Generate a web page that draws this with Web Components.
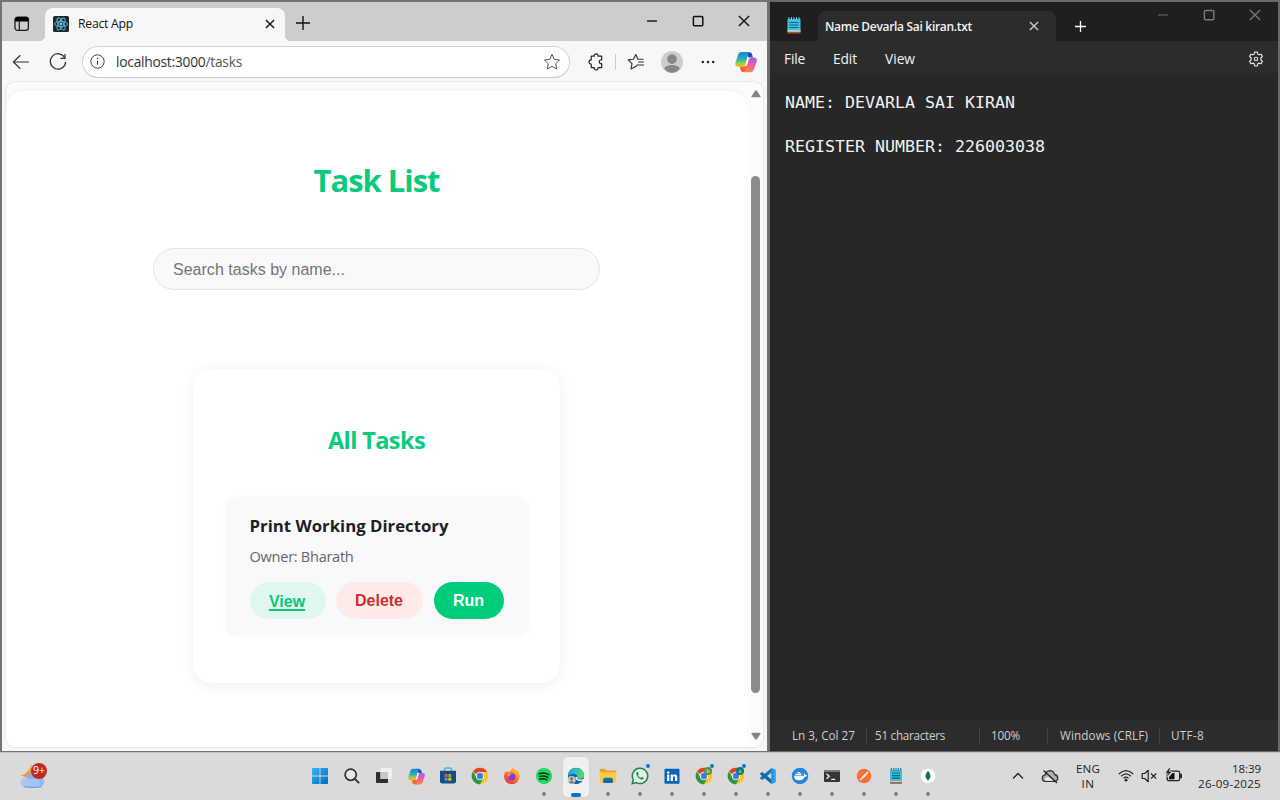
<!DOCTYPE html>
<html lang="en">
<head>
<meta charset="utf-8">
<title>Desktop</title>
<style>
html,body{margin:0;height:100%}
body{width:1280px;height:800px;overflow:hidden;background:#dadada;font-family:"Open Sans","Noto Sans",sans-serif}
</style>
</head>
<body>
<desk-top></desk-top>
<script>
const COPILOT = `<defs><linearGradient id="a" x1="0" y1="0" x2="0" y2="1"><stop offset="0" stop-color="#1c7fe0"/><stop offset=".5" stop-color="#28b6b0"/><stop offset=".8" stop-color="#b4cf35"/><stop offset="1" stop-color="#f2b71f"/></linearGradient><linearGradient id="b" x1=".4" y1="0" x2=".3" y2="1"><stop offset="0" stop-color="#a45cf0"/><stop offset=".5" stop-color="#f0609a"/><stop offset="1" stop-color="#f78a3c"/></linearGradient></defs><path d="M15.500 1.500c1 .3 1.400 1.200 1.700 2.300l.8 2.700h-4.500L11 1z" fill="#174fc0"/><path d="M7 1h8c-1 .3-1.600 1.500-2 3l-2.400 8.400C9.900 15 9 15.800 7 15.800H3.200C.6 15.800-.2 14 .5 11.500L2.900 4.300C3.600 2 4.700 1 7 1z" fill="url(#a)"/><path d="M4.800 15.800H7c2 0 3-.8 3.700-3.400l.6-2.400 1.700 10.800c-.6.300-1 .3-2 .3H7.700c-1.200 0-1.700-1.300-2.100-2.600z" fill="#f4682f"/><path d="M15 21.200H8.500c1.500-.3 2.100-1.700 2.500-3L13.400 9.600C14.100 7.300 15 6.500 17 6.500h2c2.600 0 3.300 2 2.600 4.300l-2.500 7.300c-.8 2.200-1.900 3.100-4.100 3.100z" fill="url(#b)"/><path d="M12.700 6.500h1.900c-1 .8-1.400 1.900-1.700 3.200l-1.600 5.500H9.500c.7-.7 1-1.600 1.300-2.600z" fill="#fff"/>`;
const ICONS = {
  workspace:[16,16,`<rect x="1" y="1.2" width="13.4" height="13.2" rx="2.6" fill="none" stroke="#1c1c1c" stroke-width="1.3"/><path d="M1 5.5V3.6Q1 1 3.6 1h8.2Q14.4 1 14.4 3.6v1.9z" fill="#050505"/><path d="M5.3 5v9.4" stroke="#1c1c1c" stroke-width="1.2"/>`],
  react:[16,16,`<rect width="16" height="16" rx="1.5" fill="#20262c"/><g fill="none" stroke="#58b8d0" stroke-width=".95"><ellipse cx="8" cy="8" rx="6.6" ry="2.6"/><ellipse cx="8" cy="8" rx="6.6" ry="2.6" transform="rotate(60 8 8)"/><ellipse cx="8" cy="8" rx="6.6" ry="2.6" transform="rotate(120 8 8)"/></g><circle cx="8" cy="8" r="1.4" fill="#62d4ee"/>`],
  x9:[10,10,`<path d="M.9.9l8.2 8.2M9.1.9L.9 9.1" stroke="currentColor" stroke-width="1.35" fill="none"/>`],
  x11:[12,12,`<path d="M.9.9l10.2 10.2M11.1.9L.9 11.1" stroke="currentColor" stroke-width="1.35" fill="none"/>`],
  plus:[14,14,`<path d="M7 0v14M0 7h14" stroke="currentColor" stroke-width="1.4"/>`],
  plusS:[11,11,`<path d="M5.500 0v11M0 5.500h11" stroke="#fff" stroke-width="1.300"/>`],
  min:[12,12,`<path d="M1 6h10" stroke="currentColor" stroke-width="1.4"/>`],
  max:[12,12,`<rect x="1.4" y="1.4" width="9.400" height="9.400" rx="1" fill="none" stroke="currentColor" stroke-width="1.500"/>`],
  back:[18,16,`<path d="M17 8H1.6M8.3 1.2L1.4 8l6.9 6.8" fill="none" stroke="#333" stroke-width="1.2"/>`],
  reload:[18,18,`<path d="M15.7 4.6A7.7 7.7 0 1 0 16.7 9" fill="none" stroke="#333" stroke-width="1.25"/><path d="M16 .9v4.4h-4.5" fill="none" stroke="#333" stroke-width="1.25"/>`],
  info:[15,15,`<circle cx="7.5" cy="7.5" r="6.7" fill="none" stroke="#444" stroke-width="1"/><path d="M7.5 6.7v4" stroke="#333" stroke-width="1.1"/><circle cx="7.5" cy="4.5" r=".8" fill="#333"/>`],
  star:[18,18,`<path d="M9 1.4l2.3 4.9 5.3.7-3.9 3.7 1 5.3L9 13.4 4.3 16l1-5.3L1.4 7l5.3-.7z" fill="none" stroke="#555" stroke-width="1" stroke-linejoin="round"/>`],
  puzzle:[18,18,`<path d="M4.2 3.2h3a2 1.9 0 1 1 3.9 0h3.6v3.6a2 2 0 1 0 0 3.9v3.9h-3.6a2 1.9 0 1 1-3.9 0h-3v-3.4a2 2 0 1 1 0-4.3z" fill="none" stroke="#262626" stroke-width="1.2" stroke-linejoin="round"/>`],
  favs:[18,18,`<path d="M10.2 11.2l-.2 1.6L4 16l1-5.4L1.2 6.9l5.2-.7L8.8 1.500l2.100 4.700h5.600M11 9h6M11 12h6" fill="none" stroke="#333" stroke-width="1.15" stroke-linejoin="round"/>`],
  avatar:[22,22,`<circle cx="11" cy="11" r="11" fill="#cfcdca"/><circle cx="11" cy="8.1" r="4.8" fill="#888684"/><path d="M3.200 17.600Q5 13.900 11 13.900t7.800 3.700Q15.800 21.800 11 21.800t-7.800-4.200z" fill="#888684"/>`],
  dots:[14,4,`<circle cx="1.8" cy="2" r="1.25" fill="#222"/><circle cx="7" cy="2" r="1.25" fill="#222"/><circle cx="12.200" cy="2" r="1.250" fill="#222"/>`],
  copilot:[22,22,COPILOT],
  cop:[22,22,COPILOT],
  up:[10,8,`<path d="M1 7.300Q0 7.300.5 6.200L3.900 1Q5-.3 6.100 1l3.400 5.200Q10 7.300 9 7.300z" fill="#858585"/>`],
  note:[14,17,`<rect x=".5" y="13" width="13" height="3.500" rx=".5" fill="#a4592b"/><rect x=".5" y="12.600" width="13" height="2" fill="#eee"/><path d="M.5 2.200h13v11.300h-13z" fill="#43bfe2"/><path d="M2 .3v3M4.500.3v3M7 .3v3M9.500.3v3M12 .3v3" stroke="#72dff2" stroke-width="1.100"/><path d="M2.500 5.500h9M2.500 8h9M2.500 10.500h9" stroke="#0c6184" stroke-width="1.100"/>`],
  gear:[16,16,`<path d="M6.700 1h2.600l.5 2.100 1.200.7 2.100-.6 1.300 2.200-1.500 1.600v1.900l1.500 1.600-1.300 2.200-2.100-.6-1.200.7-.5 2.200H6.700l-.5-2.200-1.200-.7-2.100.6-1.300-2.200L3.100 8.900V7L1.600 5.400l1.300-2.200 2.100.6 1.200-.7z" fill="none" stroke="#e8e8e8" stroke-width="1.150" stroke-linejoin="round"/><circle cx="8" cy="8" r="1.700" fill="none" stroke="#e8e8e8" stroke-width="1.100"/>`],
  weather:[28,30,`<path d="M11.500 3q-.5 9 6 10l-6 5-10.500-3.500Q9.500 12 11.500 3z" fill="#f29b32"/><circle cx="13" cy="17" r="6" fill="#86aef0"/><circle cx="5.500" cy="21.500" r="4.800" fill="#a9c7f8"/><circle cx="19" cy="20.500" r="5.300" fill="#93b8f4"/><path d="M5.500 18h14v8.200h-14z" fill="#a4c4f8"/><path d="M3.500 25.500q2 .8 9 .8t9-.800" stroke="#6e9be8" stroke-width="1.200" fill="none"/>`],
  win:[16,16,`<defs><linearGradient id="w" x1="0" y1="0" x2="1" y2="1"><stop stop-color="#35b6ec"/><stop offset="1" stop-color="#0069c9"/></linearGradient></defs><path d="M0 .8Q0 0 .8 0h6.800v7.600H0zM8.400 0h6.800q.8 0 .8.800v6.800H8.400zM0 8.400h7.600V16H.8q-.8 0-.8-.8zM8.400 8.400H16v6.800q0 .8-.8.800H8.400z" fill="url(#w)"/>`],
  search:[16,16,`<circle cx="6.700" cy="6.700" r="5.600" fill="#e6e6e6" stroke="#2c2c2c" stroke-width="1.700"/><path d="M10.800 10.900l4.300 4.300" stroke="#2c2c2c" stroke-width="1.900"/>`],
  taskview:[16,16,`<rect x="4.500" y="0" width="11.500" height="11" rx="1" fill="#f1f1f1"/><path d="M1 4h3.500v7H12v3.300q0 .7-.8.700H.8q-.8 0-.8-.700V4.800Q0 4 1 4z" fill="#2e2e2e"/><path d="M4.500 4H12v7H4.500z" fill="#c8c8c8"/>`],
  store:[18,18,`<path d="M5.500 4V2.300q0-1.300 1.300-1.300h4.400q1.300 0 1.300 1.300V4" fill="none" stroke="#3fb6ea" stroke-width="1.500"/><path d="M1 3.800h16v10.400Q17 16.500 14.700 16.500H3.300Q1 16.500 1 14.200z" fill="#164d80"/><path d="M5.600 7h3v3h-3z" fill="#ef5a2a"/><path d="M9.300 7h3v3h-3z" fill="#84bd28"/><path d="M5.600 10.700h3v3h-3z" fill="#29a9e8"/><path d="M9.300 10.700h3v3h-3z" fill="#fcba18"/>`],
  chrome:[18,18,`<circle cx="9" cy="9" r="8.300" fill="#f9c51f"/><path d="M9 9L1.800 4.850A8.300 8.300 0 0 1 16.200 4.850L9 5.200z" fill="#dd4335"/><path d="M1.800 4.850L5.700 11l3.800 6.280A8.300 8.300 0 0 1 1.800 4.850z" fill="#29964a"/><path d="M9 17.300l3.500-6.200-3.500 1-3.300-1.200L8 17.200z" fill="#29964a"/><circle cx="9" cy="9" r="4.100" fill="#fff"/><circle cx="9" cy="9" r="3.200" fill="#3a7de8"/>`],
  firefox:[18,18,`<defs><linearGradient id="f" x1=".9" y1="0" x2=".2" y2="1"><stop stop-color="#ffd83b"/><stop offset=".45" stop-color="#ff8128"/><stop offset="1" stop-color="#ed2459"/></linearGradient></defs><path d="M9.800.8q1.600 1 2.600 2.800 1-.4 1.300-1 3 2.700 3 6.700 0 3.400-2.300 5.600T9 17.200q-3.400 0-5.700-2.300T1 9.300Q1 6 3 3.700q.1 1 .8 1.500 2-1.100 3.800-.9Q8.300 2 9.800.8z" fill="url(#f)"/><circle cx="8.800" cy="9.800" r="3.600" fill="#7c3fd6"/><path d="M4.500 6.700q2-.6 4.500.5-2.400.4-2.900 2.600-1.500-1-1.600-3.100z" fill="#ff9a2c"/>`],
  spotify:[18,18,`<circle cx="9" cy="9" r="8" fill="#20d560"/><path d="M4.300 6.700q5-1.600 9.600.9M4.700 9.500q4.500-1.300 8.200.8M5 12.100q4-1 7 .700" stroke="#102a18" stroke-width="1.500" stroke-linecap="round" fill="none"/>`],
  edge:[18,18,`<defs><linearGradient id="e" x1="0" y1="0" x2="1" y2=".4"><stop stop-color="#219ee0"/><stop offset=".55" stop-color="#2fc4b4"/><stop offset="1" stop-color="#62d656"/></linearGradient></defs><circle cx="9" cy="9" r="8.200" fill="#0f62b4"/><path d="M.9 8.500A8.200 8.200 0 0 1 17.200 8.300q.1 3.300-4.300 3.400-3.200 0-2.800-2 .3-1.500-1-2.300Q6 5.500.9 8.500z" fill="url(#e)"/><path d="M9.300 10q-.3 3 3.200 3.300t4.300-1.300" fill="none" stroke="#f4f8fb" stroke-width="1.500"/><circle cx="4.600" cy="13" r="4" fill="#c9c9c9"/><circle cx="4.600" cy="11.700" r="1.600" fill="#777"/><path d="M2 15.200q2.600-3 5.200 0-2.500 2.600-5.200 0z" fill="#777"/>`],
  folder:[18,18,`<path d="M.8 3q0-1.200 1.200-1.200h4l1.600 1.700H16q1.200 0 1.200 1.200V8H.8z" fill="#e9a321"/><path d="M.8 5.300h15.200q1.200 0 1.200 1.200v8.300q0 1.200-1.200 1.200H2Q.8 16 .8 14.800z" fill="#fbcb45"/><path d="M4.200 16v-3.500q0-1.700 1.700-1.700h6.300q1.700 0 1.700 1.700V16z" fill="#1471b6"/><path d="M5 14.200h8" stroke="#0d5590"/>`],
  whatsapp:[18,18,`<path d="M1.200 16.700l1.100-4.100A7.700 7.700 0 1 1 5.300 15.600z" fill="#e2efe6" stroke="#1f8553" stroke-width="1.500"/><path d="M6.200 4.800q-1.200 1-.8 2.400 1.400 4 5.100 5.300 1.800.3 2.500-1.400l-2.200-1.200-1.100 1q-1.900-.8-2.700-2.600l.7-1.100-.8-2.200z" fill="#1f8553"/>`],
  linkedin:[18,18,`<rect x="1.500" y="1.700" width="15" height="15" rx="1" fill="#0a61b8"/><circle cx="5.200" cy="5.400" r="1.250" fill="#fff"/><path d="M4.100 7.500h2.200v6.400H4.100zM7.700 7.500h2.100v.9q2-2 3.700-.5.7.7.7 2v4H12v-3.300q0-1.400-1-1.400-1.100 0-1.100 1.500v3.200H7.700z" fill="#fff"/>`],
  vscode:[18,18,`<path d="M12.500 1l4.300 1.700v12.600L12.500 17z" fill="#27a2eb"/><path d="M12.500 1v4.500L3.300 13 1 11.500v-.8z" fill="#1277bd"/><path d="M12.500 17v-4.500L3.300 5 1 6.500v.8z" fill="#0c67ad"/><path d="M12.500 1.100l1.200 1v13.700l-1.200 1.100z" fill="#1b8bd6"/>`],
  docker:[18,18,`<circle cx="9" cy="9" r="8.300" fill="#2287e2"/><path d="M3 8.800h10q.2-1.100-.3-1.900l.8-.7q1.200.9 1.200 1.900l1.500.2q-.6 1.500-2.400 1.500-1.500 3.500-5.700 3.500Q3 13.300 3 8.800z" fill="#fff"/><path d="M4.400 6.700h6v1.500h-6zM6.500 5h2.900v1.300H6.500z" fill="#fff"/>`],
  terminal:[18,18,`<rect x="1" y="3" width="16" height="12" rx="1" fill="#333536"/><path d="M1 5V4q0-1 1-1h14q1 0 1 1v1z" fill="#77797b"/><path d="M3.500 6.700L6.300 9.200l-2.800 2.500M8.200 12.300h4" stroke="#f2f2f2" stroke-width="1.300" fill="none"/>`],
  postman:[18,18,`<circle cx="9" cy="9" r="7.300" fill="#fb6f3b"/><path d="M12.800 4.300l1 1.100-5 5.500-3.700 2.500-.6-.3 2.700-3.500z" fill="#ffe9df"/>`],
  tnote:[18,18,`<rect x="3" y="14.500" width="12" height="2.200" fill="#9a5024"/><rect x="3" y="13.800" width="12" height="1.300" fill="#eee"/><path d="M3 2.800h12v11.500H3z" fill="#3cbfd6"/><path d="M4.300.9v2.500M6.700.9v2.500M9 .9v2.500M11.400.9v2.500M13.700.9v2.500" stroke="#257a98" stroke-width="1.200"/><path d="M5 6h8M5 8.600h8M5 11.200h8" stroke="#0b6685" stroke-width="1.200"/>`],
  mongo:[18,18,`<circle cx="9" cy="9" r="7.200" fill="#fff"/><path d="M9 3.700q2.500 2.700 2.500 5.300 0 2.500-2.200 4.200v1.100h-.6v-1.100Q6.500 11.500 6.500 9 6.500 6.400 9 3.700z" fill="#12734a"/>`],
  chev:[12,8,`<path d="M1 6.500L6 1.500l5 5" fill="none" stroke="#222" stroke-width="1.300"/>`],
  cloud:[18,16,`<path d="M4.500 13.400q-3.200-.2-3.200-3.200 0-2.800 2.900-3.300Q5 2.900 9 2.700q3.800.2 4.500 3.800 3.200.5 3.200 3.500 0 3.100-3.300 3.400z" fill="#b0b0b0" stroke="#333" stroke-width="1.300"/><path d="M3 11.500L7 8.800l5.500 3.900H5z" fill="#eee"/><path d="M2.500 2.500l13.500 12.500" stroke="#222" stroke-width="1.300"/>`],
  wifi:[16,13,`<path d="M.8 5Q8-1.800 15.200 5M3.100 7.200q4.900-4.600 9.800 0M5.400 9.400q2.600-2.500 5.200 0" fill="none" stroke="#222" stroke-width="1.250"/><circle cx="8" cy="11.200" r="1.400" fill="#222"/>`],
  mute:[17,14,`<path d="M1.200 4.500h2.500L7.200 1.300v11.400L3.700 9.500H1.200z" fill="none" stroke="#222" stroke-width="1.200" stroke-linejoin="round"/><path d="M10 4.500l5.200 5.200M15.200 4.500L10 9.700" stroke="#222" stroke-width="1.200"/>`],
  battery:[18,14,`<rect x="2.200" y="3.200" width="12.500" height="9.500" rx="1.800" fill="none" stroke="#222" stroke-width="1.300"/><path d="M15.600 6.200h.9v3.600h-.9z" fill="#222" stroke="#222"/><path d="M4 11.200V9l3.500-4h2v6.200z" fill="#111"/><path d="M4.500-.5L.3 5h3L2.200 9l4.700-5.500H4L5.600-.5z" fill="#111" stroke="#dadada" stroke-width=".6"/>`]
};
const define = (name, html, after) => customElements.define(name, class extends HTMLElement {
  connectedCallback(){
    if (this.shadowRoot) return;
    const t = document.createElement('template');
    t.innerHTML = html;
    this.attachShadow({mode:'open'}).append(t.content.cloneNode(true));
    after && after(this);
  }
});

/* One glyph from the icon set, at its natural size unless w/h are given. */
customElements.define('app-icon', class extends HTMLElement {
  connectedCallback(){
    if (this.shadowRoot) return;
    const [w,h,body] = ICONS[this.getAttribute('name')];
    const W = this.getAttribute('w') || w, H = this.getAttribute('h') || h;
    this.attachShadow({mode:'open'}).innerHTML =
      `<style>:host{display:block;flex:none;width:${W}px;height:${H}px}svg{display:block}</style><svg width="${W}" height="${H}" viewBox="0 0 ${w} ${h}">${body}</svg>`;
  }
});

define('icon-cell', `<style>:host{display:flex;flex:none;align-items:center;justify-content:center;height:100%}</style><slot></slot>`,
  el => { el.style.width = el.getAttribute('w') + 'px'; });

define('browser-tabs', `<style>
:host{display:flex;height:39px;background:#cdcdcd;align-items:stretch;color:#111}
.tab{width:240px;margin:6px 0 0 4px;box-sizing:border-box;padding:0 10px 0 8px;background:#f7f7f7;border-radius:8px 8px 0 0;display:flex;align-items:center;position:relative;font-size:12.2px}
.tab:before,.tab:after{content:"";position:absolute;bottom:0;width:6px;height:6px}
.tab:before{left:-6px;background:radial-gradient(circle at 0 0,transparent 6px,#f7f7f7 6.500px)}
.tab:after{right:-6px;background:radial-gradient(circle at 100% 0,transparent 6px,#f7f7f7 6.500px)}
.name{margin-left:9px;flex:1;position:relative;top:-1px}
app-icon.u{margin-top:-2px}
.ctl{display:flex;margin-left:auto;height:38px}
</style>
<icon-cell w="39"><app-icon name="workspace" style="margin-top:4px"></app-icon></icon-cell>
<div class="tab"><app-icon name="react" class="u"></app-icon><span class="name"><ui-text w="55">React App</ui-text></span><app-icon name="x9" class="u"></app-icon></div>
<icon-cell w="35"><app-icon name="plus" style="margin-top:3px"></app-icon></icon-cell>
<div class="ctl"><icon-cell w="46"><app-icon name="min"></app-icon></icon-cell><icon-cell w="46"><app-icon name="max"></app-icon></icon-cell><icon-cell w="46"><app-icon name="x11"></app-icon></icon-cell></div>`);

define('browser-toolbar', `<style>
:host{display:flex;height:41px;background:#f7f7f7;align-items:center;color:#333}
.addr{flex:none;box-sizing:border-box;width:488px;height:32px;margin-left:6px;border:1px solid #d2d2d2;border-bottom-color:#c6c6c6;border-radius:16px;background:#fff;display:flex;align-items:center;padding:0 8px 0 7px;font-size:13.800px}
.url{margin-left:11px;flex:1}
.sep{width:1px;height:16px;background:#cacaca;margin:0 1px 0 0}
</style>
<icon-cell w="38"><app-icon name="back"></app-icon></icon-cell><icon-cell w="36"><app-icon name="reload"></app-icon></icon-cell>
<div class="addr"><app-icon name="info"></app-icon><span class="url"><ui-text w="126">localhost:3000<span style="color:#555">/tasks</span></ui-text></span><app-icon name="star"></app-icon></div>
<icon-cell w="38" style="margin-left:7px"><app-icon name="puzzle"></app-icon></icon-cell><div class="sep"></div>
<icon-cell w="38"><app-icon name="favs"></app-icon></icon-cell><icon-cell w="33"><app-icon name="avatar"></app-icon></icon-cell>
<icon-cell w="40"><app-icon name="dots"></app-icon></icon-cell><icon-cell w="36"><app-icon name="copilot"></app-icon></icon-cell>`);

define('task-button', `<style>
:host{display:flex;box-sizing:border-box;height:37px;border-radius:19px;align-items:center;justify-content:center;font:bold 16px "Liberation Sans",Arial,sans-serif}
:host([kind=view]){width:76px;background:#e0f7f0;color:#10c479;text-decoration:underline;padding:2px 1px 0 0;text-underline-offset:2px;text-decoration-thickness:1.500px}
:host([kind=delete]){width:87px;background:#ffeaea;color:#c9302f}
:host([kind=run]){width:70px;background:#00cc7a;color:#fff}
</style><slot></slot>`);

define('task-item', `<style>
:host{display:block;box-sizing:border-box;width:302px;height:138px;border-radius:12px;background:#f9f9fc;box-shadow:0 1px 5px rgba(0,0,0,.045);padding:17px 24px 0}
.t{height:24px;line-height:24px;font-size:16.800px;font-weight:700;color:#1f1f1f}
.o{height:24px;line-height:24px;font-size:14.600px;color:#666;margin-top:6px}
.b{display:flex;margin-top:14px}
</style>
<div class="t"><slot name="title"></slot></div><div class="o"><slot name="owner"></slot></div>
<div class="b"><task-button kind="view">View</task-button><task-button kind="delete" style="margin-left:10px">Delete</task-button><task-button kind="run" style="margin-left:11px">Run</task-button></div>`);

define('task-page', `<style>
:host{display:block;box-sizing:border-box;width:741px;height:656px;margin-top:9px;border-radius:18px 18px 0 0;background:#fff;box-shadow:0 0 12px rgba(0,0,0,.05)}
.col{display:flex;flex-direction:column;align-items:center}
h1,h2{margin:0;color:#0acb7c;font-weight:700}
h1{margin-top:65px;height:48px;line-height:48px;font-size:31px}
.search{box-sizing:border-box;width:447px;height:42px;margin-top:44px;border:1px solid #e4e4e6;border-radius:21px;background:#f9f9fc;padding-left:19px;font:16px/41px "Liberation Sans",Arial,sans-serif;color:#757575}
.card{box-sizing:border-box;width:367px;height:314px;margin-top:79px;border-radius:19px;background:#fff;box-shadow:0 2px 14px rgba(0,0,0,.07)}
h2{margin-top:51px;height:40px;line-height:40px;font-size:23.500px}
task-item{margin-top:37px}
</style>
<div class="col"><h1><ui-text w="126">Task List</ui-text></h1>
<div class="search"><ui-text w="172">Search tasks by name...</ui-text></div>
<div class="card col"><h2><ui-text w="97">All Tasks</ui-text></h2>
<task-item><ui-text slot="title" w="199">Print Working Directory</ui-text><ui-text slot="owner" w="104">Owner: Bharath</ui-text></task-item></div></div>`);

define('scroll-bar', `<style>
:host{display:flex;flex-direction:column;align-items:center;width:16px;background:#fcfcfc;padding:8px 0 0 1px;box-sizing:border-box}
.thumb{width:9px;height:517px;border-radius:5px;background:#8b8b8b;margin:78px 0 39px}
.dn{transform:rotate(180deg)}
</style><app-icon name="up"></app-icon><div class="thumb"></div><app-icon class="dn" name="up"></app-icon>`);

define('browser-window', `<style>
:host{display:flex;flex-direction:column;box-sizing:border-box;width:769px;height:752px;border:2px solid #737373;border-bottom-width:1px;background:#f7f7f7}
.view{display:flex;width:757px;height:665px;margin:0 0 0 4px;border-radius:9px;background:#fcfcfc;overflow:hidden;box-shadow:0 0 2px rgba(0,0,0,.2)}
</style>
<browser-tabs></browser-tabs><browser-toolbar></browser-toolbar>
<div class="view"><task-page></task-page><scroll-bar></scroll-bar></div>`);

define('notepad-window', `<style>
:host{display:flex;flex-direction:column;box-sizing:border-box;width:511px;height:752px;border:solid #6a6a6a;border-width:2px 2px 1px 1px;background:#272727;color:#f3f3f3}
.title{display:flex;height:39px;background:#1f1f1f}
.tab{width:238px;box-sizing:border-box;margin-top:9px;border-radius:8px 8px 0 0;background:#2c2c2c;display:flex;align-items:center;justify-content:space-between;padding:0 17px 0 7px;font-size:12px;font-weight:600}
.ctl{display:flex;margin-left:auto;height:26px;color:#777}
.menu{display:flex;height:32px;background:#2c2c2c;align-items:center;font-size:13.800px;padding:0 14px;box-sizing:border-box}
.menu ui-text{margin-right:28px;position:relative;top:1px}
.doc{flex:1;padding:19px 0 0 15px;font:16.610px/22px "DejaVu Sans Mono",monospace;white-space:pre}
.status{display:flex;height:31px;background:#2c2c2c;align-items:center;font-size:11.700px;color:#cfcfcf}
.status ui-text{position:relative;top:-1px}
.status i{width:1px;height:18px;background:#434343}
</style>
<div class="title"><icon-cell w="47"><app-icon name="note" style="margin-top:8px"></app-icon></icon-cell>
<div class="tab" style="margin-left:1px"><ui-text w="147">Name Devarla Sai kiran.txt</ui-text><app-icon name="x9" style="color:#ccc"></app-icon></div>
<icon-cell w="48"><app-icon name="plusS" style="margin-top:10px"></app-icon></icon-cell>
<div class="ctl"><icon-cell w="46"><app-icon name="min" style="color:#555"></app-icon></icon-cell><icon-cell w="46"><app-icon name="max"></app-icon></icon-cell><icon-cell w="46"><app-icon name="x11"></app-icon></icon-cell></div></div>
<div class="menu"><ui-text w="21">File</ui-text><ui-text w="24">Edit</ui-text><ui-text w="30">View</ui-text><app-icon name="gear" style="margin:3px 0 0 auto"></app-icon></div>
<div class="doc">NAME: DEVARLA SAI KIRAN

REGISTER NUMBER: 226003038</div>
<div class="status"><ui-text w="63" style="margin-left:22px">Ln 3, Col 27</ui-text><i style="margin:0 8px 0 11px"></i><ui-text w="70">51 characters</ui-text><i style="margin:0 11px 0 34px"></i><ui-text w="29">100%</ui-text><i style="margin:0 12px 0 27px"></i><ui-text w="88">Windows (CRLF)</ui-text><i style="margin:0 11px 0 11px"></i><ui-text w="33">UTF-8</ui-text></div>`);

define('task-icon', `<style>
:host{display:flex;position:relative;width:32px;height:40px;flex:none;align-items:center;justify-content:center}
:host([active]):before{content:"";position:absolute;inset:0 3px;background:#f0f0f0;border-radius:4px;box-shadow:0 0 1px rgba(0,0,0,.3)}
app-icon{position:relative;top:-1px}
:host([run]):after{content:"";position:absolute;left:14px;bottom:1px;width:4px;height:4px;border-radius:2px;background:#7c7c7c}
:host([active]):after{content:"";position:absolute;left:11px;bottom:0;width:10px;height:4px;border-radius:2px;background:#0b6fc2}
.ping{position:absolute;left:22px;top:7px;width:4px;height:4px;border-radius:2px;background:#0b75c9}
.mark{position:absolute;left:16px;top:10px;width:8px;height:8px;border-radius:4px;font:6px/8px "Open Sans",sans-serif;text-align:center;color:#e5efe0}
</style>`, el => {
  const g = n => el.getAttribute(n);
  const size = g('name') === 'cop' ? ' w="17" h="17"' : '';
  el.shadowRoot.innerHTML += `<app-icon name="${g('name')}"${size}></app-icon>` +
    (el.hasAttribute('ping') ? '<span class="ping"></span>' : '') +
    (g('mark') ? `<span class="mark" style="background:${g('tint')}">${g('mark')}</span>` : '');
});

define('task-bar', `<style>
:host{display:flex;box-sizing:border-box;width:1280px;height:48px;background:#dadada;border-top:1px solid #c4c4c4;align-items:center;color:#1f1f1f;font-size:11.600px}
.w{position:relative;width:284px;padding-left:20px;box-sizing:content-box}
.w b{position:absolute;left:31px;top:0;width:16px;height:16px;border-radius:8px;background:#c02a20;color:#fff;font-weight:400;font-size:10.500px;line-height:15px;text-align:center}
.apps{display:flex;height:40px;margin-top:1px}
.st{display:flex;flex-direction:column;line-height:15.500px;margin-top:-1px}
</style>
<div class="w"><app-icon name="weather" style="margin-top:-2px"></app-icon><b>9+</b></div>
<div class="apps">
<task-icon name="win"></task-icon><task-icon name="search"></task-icon><task-icon name="taskview"></task-icon><task-icon name="cop"></task-icon><task-icon name="store"></task-icon><task-icon name="chrome"></task-icon><task-icon name="firefox"></task-icon><task-icon name="spotify" run></task-icon><task-icon name="edge" active></task-icon><task-icon name="folder" run></task-icon><task-icon name="whatsapp" run ping></task-icon><task-icon name="linkedin" run></task-icon><task-icon name="chrome" run ping mark="b" tint="#5c9138"></task-icon><task-icon name="chrome" run ping mark="s" tint="#0b7a72"></task-icon><task-icon name="vscode" run></task-icon><task-icon name="docker" run></task-icon><task-icon name="terminal" run></task-icon><task-icon name="postman" run></task-icon><task-icon name="tnote" run></task-icon><task-icon name="mongo" run></task-icon>
</div>
<app-icon name="chev" style="margin:-2px 0 0 68px"></app-icon><app-icon name="cloud" style="margin:-1px 0 0 17px"></app-icon>
<div class="st" style="align-items:center;margin-left:16px;width:26px"><ui-text w="24">ENG</ui-text><ui-text w="13">IN</ui-text></div>
<app-icon name="wifi" style="margin:-2px 0 0 17px"></app-icon><app-icon name="mute" style="margin:-1px 0 0 7px"></app-icon><app-icon name="battery" style="margin:-3px 0 0 7px"></app-icon>
<div class="st" style="align-items:flex-end;margin-left:auto;padding-right:19px"><ui-text w="29">18:39</ui-text><ui-text w="63">26-09-2025</ui-text></div>`);

define('desk-top', `<style>
:host{display:flex;flex-direction:column;width:1280px;height:800px}
.row{display:flex;height:752px}
</style><div class="row"><browser-window></browser-window><notepad-window></notepad-window></div><task-bar></task-bar>`);

/* A single line of text, tracked so that its advance equals the w attribute. */
customElements.define('ui-text', class extends HTMLElement {
  connectedCallback(){
    if (!this.shadowRoot) this.attachShadow({mode:'open'}).innerHTML =
      '<style>:host{display:inline-block;flex:none;white-space:nowrap}</style><slot></slot>';
    const w = +this.getAttribute('w');
    this.style.letterSpacing = (w - this.getBoundingClientRect().width) / this.textContent.length + 'px';
  }
});
</script>
</body>
</html>
